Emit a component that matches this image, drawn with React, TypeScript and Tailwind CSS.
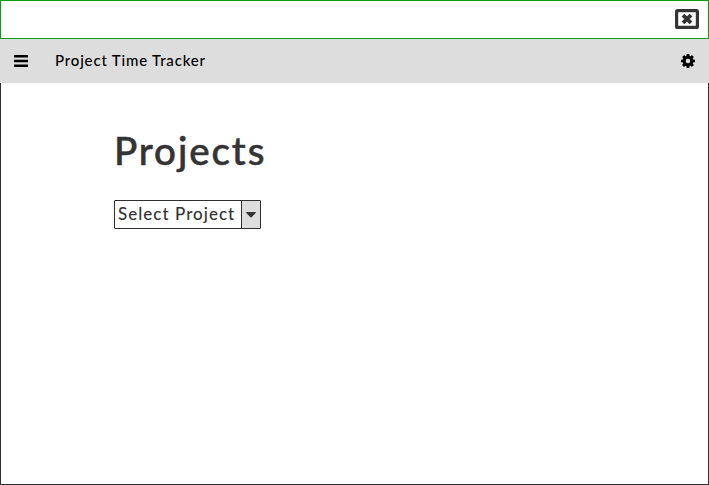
function CloseIcon() {
  return (
    <svg width="24" height="20" viewBox="0 0 24 20" fill="none" stroke="#343434">
      <rect x="1.6" y="1.6" width="20.8" height="16.8" rx="1" strokeWidth="3.2" />
      <path d="M8 6.1 16 13.9M16 6.1 8 13.9" strokeWidth="3.9" />
    </svg>
  );
}

function GearIcon() {
  return (
    <svg width="14" height="14" viewBox="0 128 1536 1536" fill="#000" fillRule="evenodd">
      <path d="M1024 896a256 256 0 1 0-512 0a256 256 0 1 0 512 0zM1536 787v222q0 12-8 23t-20 13l-185 28q-19 54-39 91 35 50 107 138 10 12 10 25t-9 23q-27 37-99 108t-94 71q-12 0-26-9l-138-108q-44 23-91 38-16 136-29 186-7 28-36 28h-222q-14 0-24.5-8.5t-11.5-21.5l-28-184q-49-16-90-37l-141 107q-10 9-25 9-14 0-25-11-126-114-165-168-7-10-7-23 0-12 8-23 15-21 51-66.5t54-70.5q-27-50-41-99l-183-27q-13-2-21-12.5t-8-23.5v-222q0-12 8-23t19-13l186-28q14-46 39-92-40-57-107-138-10-12-10-24 0-10 9-23 26-36 98.5-107.5t94.5-71.5q13 0 26 10l138 107q44-23 91-38 16-136 29-186 7-28 36-28h222q14 0 24.5 8.5t11.5 21.5l28 184q49 16 90 37l142-107q9-9 24-9 13 0 25 10 129 119 165 170 7 8 7 22 0 12-8 23-15 21-51 66.5t-54 70.5q26 50 41 98l183 28q13 2 21 12.5t8 23.5z" />
    </svg>
  );
}

export default function App() {
  return (
    <div className="flex h-[485px] w-[709px] flex-col bg-white font-['Lato',sans-serif] font-medium text-[#343434]">
      <header className="flex h-[39px] shrink-0 items-start justify-end border border-[#0a9e14] pt-2 pr-[9px]">
        <button aria-label="Close">
          <CloseIcon />
        </button>
      </header>
      <nav className="flex h-11 shrink-0 items-center bg-[#dddddd] pr-3.5 pl-3.5 text-black">
        <button aria-label="Menu" className="w-[41px]">
          <svg width="14" height="12" viewBox="0 0 14 12">
            <path d="M0 1.2h14M0 6h14M0 10.8h14" stroke="#000" strokeWidth="2.4" />
          </svg>
        </button>
        <span className="flex-1 pb-0.5 text-[15px] leading-none tracking-[0.82px] whitespace-nowrap">
          Project Time Tracker
        </span>
        <button aria-label="Settings">
          <GearIcon />
        </button>
      </nav>
      <main className="flex-1 border-x border-b border-[#2f2f2f] pt-11 pl-[113px]">
        <h1 className="h-[73px] text-[38.5px] leading-[47px] tracking-[1.9px] [-webkit-text-stroke:0.55px_#343434]">
          Projects
        </h1>
        <button className="flex h-[29px] w-[147px] rounded-[1px] border border-[#2f2f2f] text-left">
          <span className="flex-1 pl-[3px] text-[17px] leading-[26px] tracking-[1.02px] whitespace-nowrap">
            Select Project
          </span>
          <span className="flex w-[19px] items-center justify-center border-l border-[#2f2f2f] bg-[#dddddd]">
            <svg width="10" height="6" viewBox="0 0 10 6" fill="#343434">
              <path d="M.8 0h8.4q1 .2.5 1L5.6 5.2q-.6.6-1.2 0L.3 1Q-.2 .2.8 0Z" />
            </svg>
          </span>
        </button>
      </main>
    </div>
  );
}
